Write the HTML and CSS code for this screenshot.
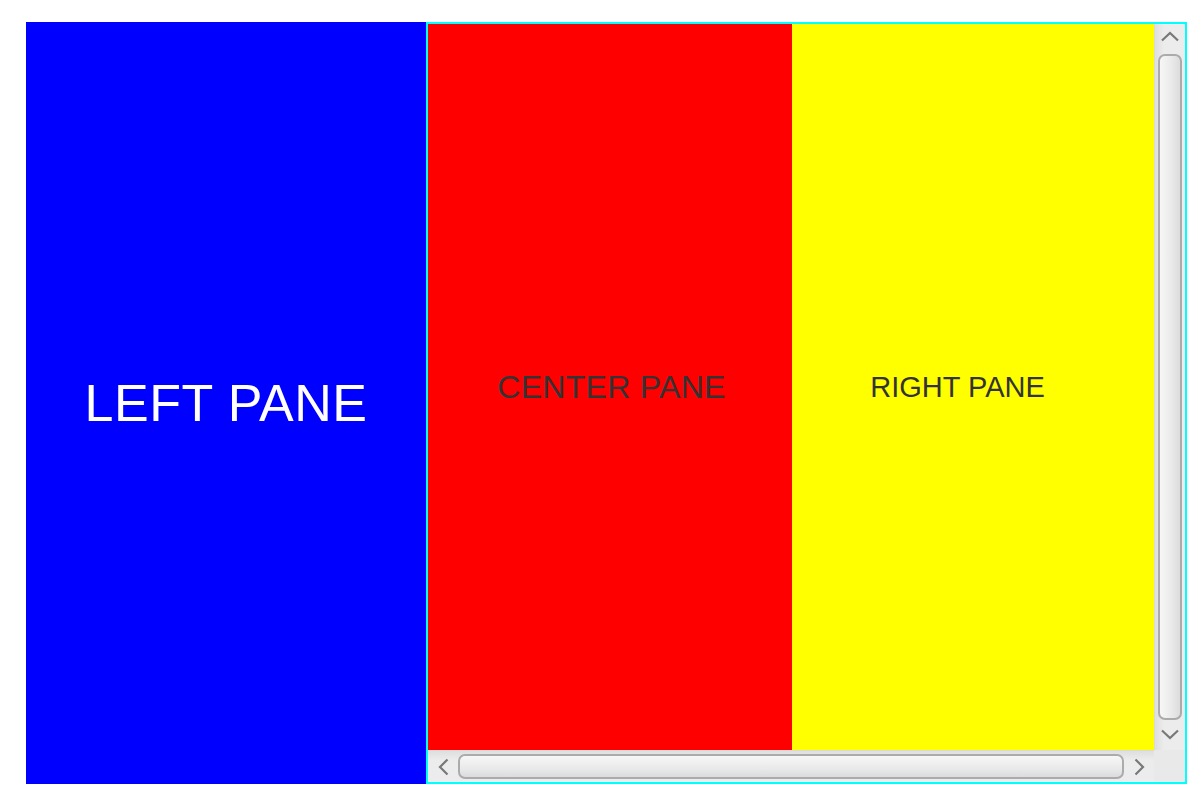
FILE: index.html
```html
<!DOCTYPE html>
<html>
<head>
<meta charset="utf-8">
<link rel="stylesheet" href="styles.css">
</head>
<body>
<div class="stage">
  <div class="left-pane"><span>LEFT PANE</span></div>
  <div class="scroll-pane">
    <div class="viewport">
      <div class="center-pane"><span>CENTER PANE</span></div>
      <div class="right-pane"><span>RIGHT PANE</span></div>
    </div>
    <div class="vbar">
      <div class="vbtn vbtn-up"><svg width="20" height="11" viewBox="0 0 20 11"><polyline points="2,9.5 10,2 18,9.5" fill="none" stroke="#787878" stroke-width="2.2"/></svg></div>
      <div class="vtrack"><div class="vthumb"></div></div>
      <div class="vbtn vbtn-down"><svg width="20" height="11" viewBox="0 0 20 11"><polyline points="2,1.5 10,9 18,1.5" fill="none" stroke="#787878" stroke-width="2.2"/></svg></div>
    </div>
    <div class="hbar">
      <div class="hbtn"><svg width="11" height="18" viewBox="0 0 11 18"><polyline points="9.5,1.5 2,9 9.5,16.5" fill="none" stroke="#787878" stroke-width="2.2"/></svg></div>
      <div class="htrack"><div class="hthumb"></div></div>
      <div class="hbtn"><svg width="11" height="18" viewBox="0 0 11 18"><polyline points="1.5,1.5 9,9 1.5,16.5" fill="none" stroke="#787878" stroke-width="2.2"/></svg></div>
    </div>
    <div class="corner"></div>
  </div>
</div>
</body>
</html>
```
FILE: styles.css
```css
html, body {
  margin: 0;
  padding: 0;
  background: #ffffff;
}
body {
  width: 1196px;
  height: 790px;
  overflow: hidden;
  font-family: "Liberation Sans", Arial, sans-serif;
}
.stage {
  display: flex;
  padding: 22px 0 0 26px;
}
.left-pane {
  width: 400px;
  height: 762px;
  background: #0000ff;
  color: #ffffff;
  font-size: 52px;
  letter-spacing: 0.5px;
  display: flex;
  align-items: center;
  justify-content: center;
}
.scroll-pane {
  width: 761px;
  height: 762px;
  box-sizing: border-box;
  border: 2px solid #00ffff;
  display: grid;
  grid-template-columns: 726px 31px;
  grid-template-rows: 726px 32px;
}
.viewport {
  display: flex;
  overflow: hidden;
}
.center-pane {
  width: 364px;
  flex: none;
  background: #ff0000;
  color: #333333;
  font-size: 32px;
  letter-spacing: 0.3px;
  display: flex;
  align-items: center;
  justify-content: center;
  padding-left: 3px;
  box-sizing: border-box;
}
.right-pane {
  width: 362px;
  flex: none;
  background: #ffff00;
  color: #333333;
  font-size: 29px;
  display: flex;
  align-items: center;
  justify-content: center;
  padding-right: 31px;
  box-sizing: border-box;
}
.vbar {
  display: flex;
  flex-direction: column;
  background: linear-gradient(to right, #dedede, #ececec 30%, #ececec);
  border-left: 1px solid #d9d9d9;
  box-sizing: border-box;
}
.vbtn {
  height: 30px;
  flex: none;
  display: flex;
  justify-content: center;
  box-sizing: border-box;
  align-items: flex-start;
}
.vbtn-up {
  padding-top: 7px;
}
.vbtn-down {
  padding-top: 9px;
}
.vtrack {
  flex: 1;
  display: flex;
  padding: 0 3px 0 3px;
}
.vthumb {
  flex: 1;
  box-sizing: border-box;
  border: 2px solid #ababab;
  border-radius: 7px;
  background: linear-gradient(to right, #f7f7f7, #e9e9e9 60%, #dcdcdc);
}
.hbar {
  display: flex;
  background: linear-gradient(to bottom, #dedede, #ececec 30%, #ececec);
  border-top: 1px solid #d9d9d9;
  box-sizing: border-box;
}
.hbtn {
  width: 30px;
  flex: none;
  display: flex;
  align-items: center;
  justify-content: center;
}
.htrack {
  flex: 1;
  display: flex;
  padding: 3px 0 3px 0;
}
.hthumb {
  flex: 1;
  box-sizing: border-box;
  border: 2px solid #ababab;
  border-radius: 7px;
  background: linear-gradient(to bottom, #f7f7f7, #e9e9e9 60%, #dcdcdc);
}
.corner {
  background: #e9e9e9;
}
```
